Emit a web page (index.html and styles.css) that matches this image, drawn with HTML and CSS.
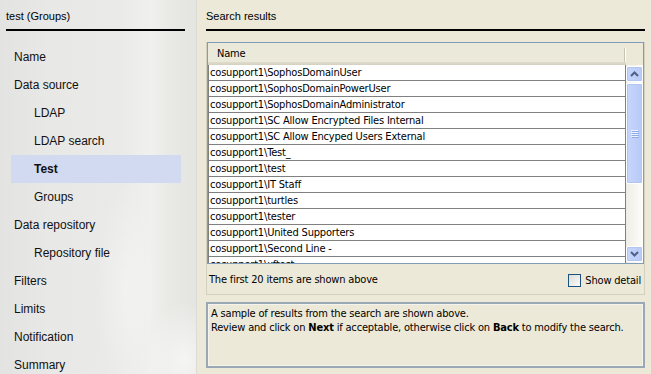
FILE: index.html
```html
<!DOCTYPE html>
<html lang="en">
<head>
    <meta charset="UTF-8">
    <title>Search results</title>
    <link rel="stylesheet" href="styles.css">
</head>
<body>

<div class="wizard">
    <aside class="steps">
        <div class="steps-title">test (Groups)</div>
        <ul class="step-list">
            <li class="step">Name</li>
            <li class="step">Data source</li>
            <li class="step sub">LDAP</li>
            <li class="step sub">LDAP search</li>
            <li class="step sub active">Test</li>
            <li class="step sub">Groups</li>
            <li class="step">Data repository</li>
            <li class="step sub">Repository file</li>
            <li class="step">Filters</li>
            <li class="step">Limits</li>
            <li class="step">Notification</li>
            <li class="step">Summary</li>
        </ul>
    </aside>

    <main class="page">
        <div class="page-title">Search results</div>

        <div class="results">
            <div class="grid">
                <div class="grid-head">
                    <div class="col-name">Name</div>
                </div>
                <div class="grid-body">
                    <div class="rows">
                        <div class="row">cosupport1\SophosDomainUser</div>
                        <div class="row">cosupport1\SophosDomainPowerUser</div>
                        <div class="row">cosupport1\SophosDomainAdministrator</div>
                        <div class="row">cosupport1\SC Allow Encrypted Files Internal</div>
                        <div class="row">cosupport1\SC Allow Encyped Users External</div>
                        <div class="row">cosupport1\Test_</div>
                        <div class="row">cosupport1\test</div>
                        <div class="row">cosupport1\IT Staff</div>
                        <div class="row">cosupport1\turtles</div>
                        <div class="row">cosupport1\tester</div>
                        <div class="row">cosupport1\United Supporters</div>
                        <div class="row">cosupport1\Second Line -</div>
                        <div class="row">cosupport1\xftest</div>
                    </div>
                    <div class="scrollbar">
                        <div class="sb-btn">
                            <svg width="9" height="6" viewBox="0 0 9 6"><path d="M1 5 L4.5 1.5 L8 5" fill="none" stroke="#4d6185" stroke-width="2"/></svg>
                        </div>
                        <div class="sb-thumb">
                            <svg width="8" height="8" viewBox="0 0 8 8">
                                <path d="M0 0.5H7M0 2.5H7M0 4.5H7M0 6.5H7" stroke="#eef3ff" stroke-width="1"/>
                                <path d="M1 1.5H8M1 3.5H8M1 5.5H8M1 7.5H8" stroke="#8faae8" stroke-width="1"/>
                            </svg>
                        </div>
                        <div class="sb-btn down">
                            <svg width="9" height="6" viewBox="0 0 9 6"><path d="M1 1 L4.5 4.5 L8 1" fill="none" stroke="#4d6185" stroke-width="2"/></svg>
                        </div>
                    </div>
                </div>
            </div>
            <div class="results-foot">
                <span>The first 20 items are shown above</span>
                <label class="check"><span class="box"></span>Show detail</label>
            </div>
        </div>

        <div class="hint">
            A sample of results from the search are shown above.<br>
            Review and click on <b>Next</b> if acceptable, otherwise click on <b>Back</b> to modify the search.
        </div>
    </main>
</div>

</body>
</html>
```

FILE: styles.css
```css
/* wizard layout */
body {
    margin: 0;
    font-family: "Liberation Sans", Arial, sans-serif;
    background-color: #ece9d8;
    color: #000;
}
.wizard {
    display: flex;
    width: 651px;
    height: 374px;
    overflow: hidden;
}

/* left step list */
.steps {
    width: 196px;
    flex: none;
    border-right: 1px solid #dcdcd6;
    background:
        radial-gradient(ellipse 30px 110px at 125px 290px, rgba(255,255,255,0.35), rgba(255,255,255,0)),
        radial-gradient(ellipse 40px 60px at 185px 360px, rgba(255,255,255,0.6), rgba(255,255,255,0)),
        linear-gradient(to right, #e3e3e1 0, #e8e8e6 50px, #eaeae8 120px, #f0f0ee 150px, #e8e8e5 172px, #e4e4e1 196px);
}
.steps-title {
    margin: 0 11px 0 6px;
    padding-top: 10px;
    height: 19px;
    font-size: 11px;
    line-height: 13px;
    border-bottom: 2px solid #000;
}
.step-list {
    list-style: none;
    margin: 12px 0 0 11px;
    padding: 0;
    width: 170px;
}
.step {
    height: 28px;
    line-height: 28px;
    padding-left: 3px;
    font-size: 12px;
    color: #111;
}
.step.sub {
    padding-left: 23px;
}
.step.active {
    background-color: #d2daf1;
    font-weight: bold;
}

/* right page */
.page {
    flex: 1;
    padding: 0 6px 0 9px;
    font-family: "DejaVu Sans Condensed", "DejaVu Sans", sans-serif;
    font-stretch: condensed;
    font-size: 11px;
    letter-spacing: -0.18px;
}
.page-title {
    padding-top: 10px;
    height: 19px;
    line-height: 13px;
    border-bottom: 2px solid #000;
    font-family: "Liberation Sans", Arial, sans-serif;
    letter-spacing: 0;
}
.results {
    margin-top: 11px;
    border: 1px solid #d4d0c0;
    border-top: none;
}
.grid {
    border: 1px solid #7f9db9;
}
.grid-head {
    display: flex;
    height: 22px;
}
.col-name {
    position: relative;
    width: 409px;
    padding-left: 9px;
    line-height: 21px;
    background: linear-gradient(#ebe9da 0, #ebe9da 19px, #e0ddcd 19px, #d4d0bf 22px);
}
.col-name::after {
    content: '';
    position: absolute;
    right: 1px;
    top: 5px;
    width: 1px;
    height: 14px;
    background-color: #c6c3b2;
    box-shadow: 1px 0 0 #fff;
}
.grid-body {
    display: flex;
    height: 198px;
}
.rows {
    width: 416px;
    overflow: hidden;
    border-left: 1px solid #808080;
    border-right: 1px solid #808080;
    background-color: #fff;
}
.row {
    height: 15px;
    line-height: 15px;
    padding-left: 1px;
    border-bottom: 1px solid #808080;
    white-space: nowrap;
}

/* scrollbar */
.scrollbar {
    flex: 1;
    display: flex;
    flex-direction: column;
    background: linear-gradient(to right, #eeede5, #fdfdfa);
}
.sb-btn,
.sb-thumb {
    display: flex;
    align-items: center;
    justify-content: center;
    margin: 1px 0 0 0;
    border: 1px solid #fff;
    border-radius: 2px;
    background: linear-gradient(to right, #c6d5fc, #b7caf6);
    box-shadow: 0 0 0 1px #b2c5f0 inset;
}
.sb-btn {
    height: 14px;
}
.sb-btn.down {
    margin-top: auto;
    margin-bottom: 1px;
}
.sb-thumb {
    height: 99px;
}

/* footer under the grid */
.results-foot {
    display: flex;
    align-items: center;
    justify-content: space-between;
    height: 30px;
    padding: 0 3px 0 2px;
}
.check {
    display: flex;
    align-items: center;
    gap: 4px;
    margin-top: 3px;
}
.check .box {
    width: 11px;
    height: 11px;
    border: 1px solid #1c5180;
    background: linear-gradient(135deg, #dcdcd7, #fbfbf9);
}

/* explanation box */
.hint {
    margin-top: 7px;
    height: 59px;
    padding: 3px 3px 0 3px;
    border: 2px solid #9aa7b5;
    box-shadow: inset 0 0 0 1px #f4f3ec;
    line-height: 14px;
}
```
